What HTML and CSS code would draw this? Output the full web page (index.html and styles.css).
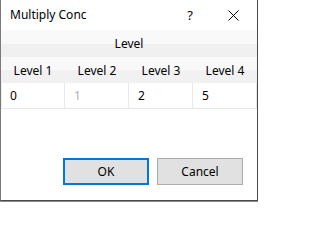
FILE: index.html
```html
<!DOCTYPE html>
<html>
<head>
<meta charset="utf-8">
<link rel="stylesheet" href="styles.css">
</head>
<body>
<div class="window">
  <div class="titlebar">
    <span class="title">Multiply Conc</span>
    <span class="help">?</span>
    <svg class="close" width="11" height="11" viewBox="0 0 11 11"><path d="M0.5 0.5L10.5 10.5M10.5 0.5L0.5 10.5" stroke="#000" stroke-width="1" fill="none"/></svg>
  </div>
  <div class="table">
    <div class="group-head">Level</div>
    <div class="col-heads">
      <div class="ch">Level 1</div>
      <div class="ch">Level 2</div>
      <div class="ch">Level 3</div>
      <div class="ch">Level 4</div>
    </div>
    <div class="row">
      <div class="cell">0</div>
      <div class="cell dim">1</div>
      <div class="cell">2</div>
      <div class="cell">5</div>
    </div>
  </div>
  <div class="buttons">
    <button class="btn default">OK</button>
    <button class="btn">Cancel</button>
  </div>
</div>
</body>
</html>
```
FILE: styles.css
```css
html, body {
  margin: 0;
  padding: 0;
  background: #fff;
}
body {
  width: 258px;
  height: 202px;
  overflow: hidden;
  font-family: "Noto Sans", "Open Sans", sans-serif;
  font-size: 12px;
  color: #000;
  background: #8a8a8a;
}
.window {
  box-sizing: border-box;
  width: 258px;
  height: 201px;
  background: #fff;
  border-left: 1px solid #7a7a7a;
  border-right: 1px solid #4a4a4a;
  border-bottom: 1px solid #4a4a4a;
  display: flex;
  flex-direction: column;
  overflow: hidden;
}
.titlebar {
  height: 30px;
  display: flex;
  align-items: center;
  flex-shrink: 0;
}
.title {
  margin-left: 9px;
  line-height: 30px;
  flex: 1;
}
.help {
  font-size: 13px;
  margin-right: 35px;
  line-height: 30px;
}
.close {
  margin-right: 18px;
}
.table {
  width: 257px;
  overflow: hidden;
  flex-shrink: 0;
}
.group-head {
  height: 27px;
  line-height: 27px;
  text-align: center;
  width: 256px;
  background: linear-gradient(to bottom, #f9f9fa 0, #f9f9fa 52%, #f0f0f1 52%, #f0f0f1 100%);
}
.col-heads, .row {
  display: grid;
  grid-template-columns: 64px 64px 64px 64px;
  width: 257px;
}
.col-heads {
  height: 25px;
  background: linear-gradient(to bottom, #f9f9fa 0, #f9f9fa 50%, #f1f1f2 50%, #f1f1f2 100%);
}
.ch {
  text-align: center;
  line-height: 28px;
  height: 25px;
}
.row {
  height: 27px;
  border-bottom: 1px solid #e8e8e8;
  border-top: 1px solid #f0f0f0;
  box-sizing: border-box;
}
.cell {
  padding-left: 9px;
  line-height: 25px;
  border-right: 1px solid #e8e8e8;
}
.cell:first-child {
  border-left: 1px solid #ececec;
  padding-left: 8px;
}
.dim {
  color: #a9b2bb;
}
.buttons {
  margin-top: auto;
  display: flex;
  justify-content: flex-end;
  gap: 8px;
  padding: 0 14px 15px 0;
}
.btn {
  box-sizing: border-box;
  width: 86px;
  height: 27px;
  font-family: "Noto Sans", "Open Sans", sans-serif;
  font-size: 12px;
  color: #000;
  background: #e1e1e1;
  border: 1px solid #adadad;
  padding: 0;
  margin: 0;
}
.btn.default {
  border: 2px solid #0078d7;
}
```
